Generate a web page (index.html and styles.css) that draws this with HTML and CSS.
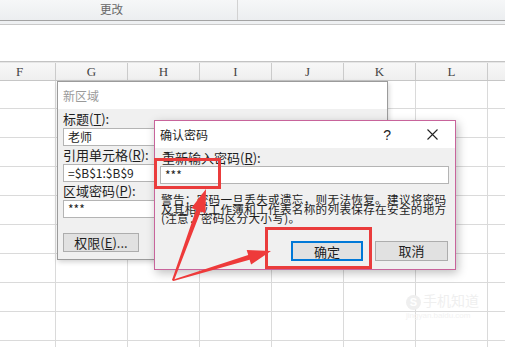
FILE: index.html
```html
<!DOCTYPE html>
<html lang="zh-CN">

<head>
    <meta http-equiv="Content-Type" content="text/html; charset=UTF-8">
    <meta name="viewport" content="width=device-width, initial-scale=1.0">
    <link rel="stylesheet" href="styles.css">
</head>

<body>
    <div class="ribbon">
        <div class="group">更改</div>
        <div class="group wide"></div>
    </div>
    <div class="ribbon-foot"></div>
    <div class="formula"></div>

    <div class="headers">
        <div class="col">F</div>
        <div class="col">G</div>
        <div class="col">H</div>
        <div class="col">I</div>
        <div class="col">J</div>
        <div class="col">K</div>
        <div class="col">L</div>
    </div>
    <div class="cells"></div>

    <!-- back window -->
    <div class="window region">
        <div class="titlebar"><span class="title dim">新区域</span></div>
        <div class="body">
            <div class="label">标题(<u>T</u>):</div>
            <div class="field">老师</div>
            <div class="label">引用单元格(<u>R</u>):</div>
            <div class="field">=$B$1:$B$9</div>
            <div class="label">区域密码(<u>P</u>):</div>
            <div class="field">***</div>
            <button class="btn perm">权限(<u>E</u>)...</button>
        </div>
    </div>

    <!-- front window -->
    <div class="window confirm">
        <div class="titlebar">
            <span class="title">确认密码</span>
            <span class="help">?</span>
            <svg class="close" width="11" height="11" viewBox="0 0 11 11">
                <path d="M0.5 0.5 L10.5 10.5 M10.5 0.5 L0.5 10.5" stroke="#222" stroke-width="1.1" fill="none" />
            </svg>
        </div>
        <div class="body">
            <div class="label">重新输入密码(<u>R</u>):</div>
            <div class="field">***</div>
            <p class="warn">警告：密码一旦丢失或遗忘，则无法恢复。建议将密码<br>及其相应工作簿和工作表名称的列表保存在安全的地方<br>(注意：密码区分大小写)。</p>
            <div class="actions">
                <button class="btn primary">确定</button>
                <button class="btn">取消</button>
            </div>
        </div>
    </div>

    <!-- annotations drawn over the screenshot -->
    <svg class="marks" width="505" height="347" viewBox="0 0 505 347">
        <rect x="155.5" y="159.5" width="64" height="28" fill="none" stroke="#ea3c3c" stroke-width="3" />
        <rect x="266.5" y="228.5" width="104" height="39" fill="none" stroke="#ea3c3c" stroke-width="3" />
        <polygon fill="#ee3a3a" points="172,280 196.1,209.7 191.4,208 206,189 205.4,213.2 200.7,211.5 174,280.5" />
        <polygon fill="#ee3a3a" points="172,280 248.2,254.9 246.7,250.1 271,251 251.1,264.5 249.6,259.7 173.5,281" />
    </svg>

    <div class="watermark">
        <span class="logo">S</span><span>手机知道</span>
        <div class="url">jingyan.baidu.com</div>
    </div>
</body>

</html>
```

FILE: styles.css
```css
body {
    margin: 0;
    width: 505px;
    height: 347px;
    overflow: hidden;
    position: relative;
    background: #ffffff;
    font-family: "Noto Sans CJK SC", "Liberation Sans", sans-serif;
    font-size: 13px;
    color: #1e1e1e;
}

.ribbon {
    display: flex;
    height: 20px;
    background: linear-gradient(to bottom, #f6f7f8, #eceef0);
    border-bottom: 1px solid #a3a3a3;
}

.group {
    width: 238px;
    border-right: 1px solid #d2d2d2;
    padding-left: 100px;
    box-sizing: border-box;
    font-size: 11.5px;
    line-height: 19px;
    color: #666666;
}

.group.wide {
    flex: 1;
    border-right: none;
}

.ribbon-foot {
    height: 3px;
    background: #eef0f2;
    border-bottom: 1px solid #c9c9c9;
}

.formula {
    height: 36px;
    border-bottom: 1px solid #c3c3c3;
}

.headers {
    display: flex;
    height: 17px;
    margin-left: -16px;
    border-top: 1px solid #e6e6e6;
    border-bottom: 1px solid #c6c6c6;
    background: linear-gradient(to bottom, #f7f7f7, #efefef);
}

.col {
    flex: 0 0 72px;
    box-sizing: border-box;
    border-right: 1px solid #cbcbcb;
    text-align: center;
    font-family: "Liberation Serif", serif;
    font-size: 13px;
    line-height: 17px;
    color: #444444;
}

.cells {
    height: 270px;
    background-image:
        linear-gradient(to right, transparent 71px, #dadada 71px),
        linear-gradient(to bottom, transparent 28px, #dadada 28px);
    background-size: 72px 100%, 100% 29px;
    background-position: -16px 0, 0 -1px;
}

.window {
    position: absolute;
    box-sizing: border-box;
    display: flex;
    flex-direction: column;
    background: #f0f0f0;
}

.region {
    left: 57px;
    top: 81px;
    width: 331px;
    height: 179px;
    border: 1px solid #9b9b9b;
    box-shadow: 1px 2px 5px rgba(0, 0, 0, 0.18);
}

.confirm {
    left: 154px;
    top: 120px;
    width: 302px;
    height: 150px;
    border: 1px solid #c8649b;
    box-shadow: 2px 3px 9px rgba(0, 0, 0, 0.25);
}

.titlebar {
    display: flex;
    align-items: center;
    height: 27px;
    background: #ffffff;
    padding-left: 5px;
}

.title {
    font-size: 12px;
    line-height: 16px;
}

.title.dim {
    color: #9a9a9a;
}

.help {
    margin-left: auto;
    font-family: "Liberation Sans", sans-serif;
    font-size: 14px;
    line-height: 16px;
    color: #222222;
}

.close {
    margin: 0 17px 0 36px;
}

.body {
    flex: 1;
    padding: 1px 6px 0 5px;
}

.label {
    height: 18px;
    line-height: 18px;
    font-size: 13px;
}

.confirm .label {
    height: 17px;
    line-height: 17px;
    padding-left: 2px;
}

.field {
    height: 18px;
    box-sizing: border-box;
    border: 1px solid #b4b4b4;
    background: #ffffff;
    padding-left: 4px;
    font-size: 12px;
    line-height: 16px;
}

.region .field {
    width: 300px;
}

/* the dialog text is packed tightly in the original */
.warn {
    margin: 11px 0 0 1px;
    font-size: 11.6px;
    letter-spacing: 0.3px;
    line-height: 9.6px;
    white-space: nowrap;
}

.btn {
    height: 20px;
    padding: 0;
    border: 1px solid #adadad;
    background: #e1e1e1;
    font-family: "Noto Sans CJK SC", sans-serif;
    font-size: 13px;
    line-height: 17px;
    color: #1e1e1e;
}

.perm {
    display: block;
    width: 76px;
    height: 19px;
    margin-top: 15px;
}

.actions {
    display: flex;
    justify-content: flex-end;
    gap: 12px;
    margin-top: 17px;
    padding-right: 1px;
}

.actions .btn {
    width: 73px;
}

.btn.primary {
    width: 72px;
    border: 2px solid #0078d7;
}

.marks {
    position: absolute;
    left: 0;
    top: 0;
}

.watermark {
    position: absolute;
    left: 406px;
    top: 291px;
    color: #efefef;
    font-size: 14px;
    line-height: 18px;
}

.logo {
    display: inline-block;
    width: 15px;
    height: 15px;
    margin-right: 2px;
    border-radius: 50%;
    background: #efefef;
    color: #ffffff;
    text-align: center;
    font-family: "Liberation Sans", sans-serif;
    font-weight: bold;
    font-size: 11px;
    line-height: 15px;
}

.url {
    font-family: "Liberation Sans", sans-serif;
    font-size: 8px;
    line-height: 12px;
    color: #f2f2f2;
}
```
